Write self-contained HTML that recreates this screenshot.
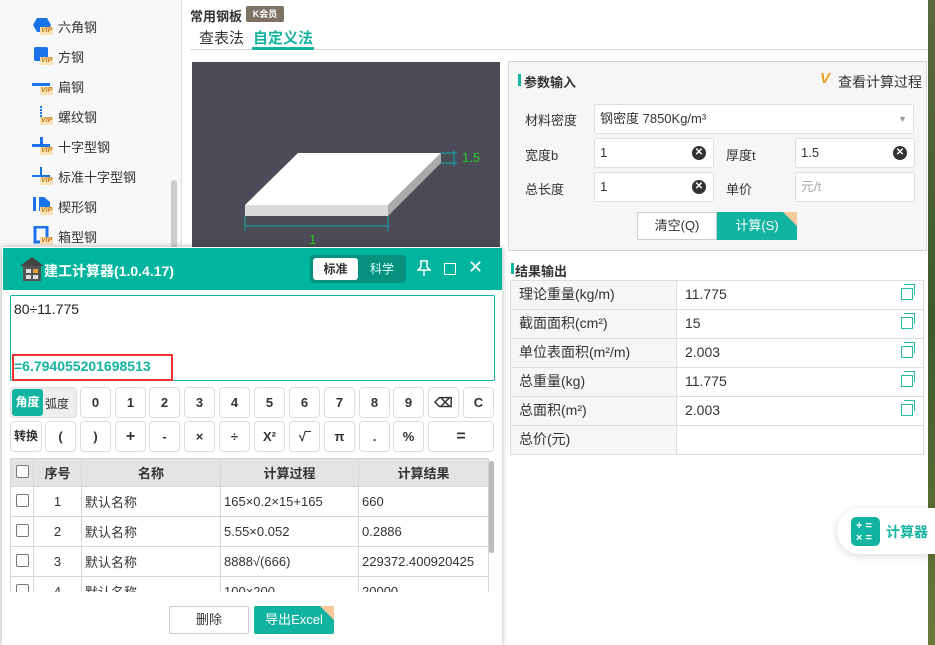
<!DOCTYPE html>
<html><head><meta charset="utf-8"><style>
*{box-sizing:border-box;margin:0;padding:0}
body{width:935px;height:645px;overflow:hidden;position:relative;background:#fff;font-family:"Liberation Sans","Noto Sans CJK SC",sans-serif;font-size:13px;color:#333}
.abs{position:absolute}
.side{left:0;top:0;width:182px;height:645px;background:#f7f8fa;border-right:1px solid #e0e0e0}
.item{position:absolute;left:32px;font-size:13px;color:#333}
.item .ic{position:absolute;left:0;top:-2px;width:20px;height:20px}
.item .vip{position:absolute;left:8px;top:9px;font-size:7px;background:#fbe3b8;color:#c47b13;padding:0 1px;font-weight:bold;line-height:8px}
.item span.t{position:absolute;left:26px;top:-1px;white-space:nowrap}
.strip{left:928px;top:0;width:7px;height:645px;background:linear-gradient(#5a6a3a,#3d5a2a,#6a7a3a)}
.key{position:absolute;height:31px;border:1px solid #ddd;border-radius:4px;background:#fff;text-align:center;line-height:29px;font-weight:bold;font-size:13px;color:#333}
table{border-collapse:collapse}
.ct td,.ct th{border:1px solid #d6d6d6;height:30px;font-size:13px}
.ct th{background:#e4e4e4;font-weight:bold;height:28px}
.rt td{border:1px solid #ddd;height:29px;padding-left:8px;font-size:14px;padding-bottom:2px}
.inp{position:absolute;height:30px;border:1px solid #ddd;border-radius:3px;background:#fff;padding-left:5px;line-height:28px;font-size:13px}
.x{position:absolute;right:7px;top:7px;width:14px;height:14px;border-radius:50%;background:#333;color:#fff;font-size:10px;line-height:14px;text-align:center;font-weight:bold}
.lbl{position:absolute;font-size:13px;color:#333}
.cp{position:absolute;right:10px;top:7px;width:12px;height:12px;border:1.5px solid #2ab9a5}
.cp:before{content:"";position:absolute;left:2px;top:-5px;width:10px;height:10px;border-top:1.5px solid #2ab9a5;border-right:1.5px solid #2ab9a5}
</style></head><body>
<div class="abs side"></div>
<div class="abs" style="left:171px;top:180px;width:6px;height:70px;background:#ccc;border-radius:3px"></div>

<div class="item" style="top:18px"><svg class="ic" viewBox="0 0 20 20"><polygon points="5,2 15,2 19,9 15,16 5,16 1,9" fill="#1a73e8"/></svg><i class="vip">VIP</i><span class="t">六角钢</span></div>
<div class="item" style="top:48px"><svg class="ic" viewBox="0 0 20 20"><rect x="2" y="1" width="14" height="14" rx="2" fill="#1a73e8"/></svg><i class="vip">VIP</i><span class="t">方钢</span></div>
<div class="item" style="top:78px"><svg class="ic" viewBox="0 0 20 20"><rect x="0" y="7" width="18" height="3" fill="#1a73e8"/></svg><i class="vip">VIP</i><span class="t">扁钢</span></div>
<div class="item" style="top:108px"><svg class="ic" viewBox="0 0 20 20"><line x1="9" y1="0" x2="9" y2="14" stroke="#1a73e8" stroke-width="2" stroke-dasharray="2 1"/></svg><i class="vip">VIP</i><span class="t">螺纹钢</span></div>
<div class="item" style="top:138px"><svg class="ic" viewBox="0 0 20 20"><rect x="0" y="8" width="18" height="3" fill="#1a73e8"/><rect x="8" y="1" width="3" height="15" fill="#1a73e8"/></svg><i class="vip">VIP</i><span class="t">十字型钢</span></div>
<div class="item" style="top:168px"><svg class="ic" viewBox="0 0 20 20"><rect x="0" y="9" width="18" height="2" fill="#1a73e8"/><rect x="8" y="1" width="2" height="16" fill="#1a73e8"/></svg><i class="vip">VIP</i><span class="t">标准十字型钢</span></div>
<div class="item" style="top:198px"><svg class="ic" viewBox="0 0 20 20"><rect x="1" y="1" width="3" height="14" fill="#1a73e8"/><polygon points="7,1 12,1 18,6 18,15 7,15" fill="#1a73e8"/></svg><i class="vip">VIP</i><span class="t">楔形钢</span></div>
<div class="item" style="top:228px"><svg class="ic" viewBox="0 0 20 20"><rect x="3" y="1" width="12" height="15" fill="none" stroke="#1a73e8" stroke-width="3"/></svg><i class="vip">VIP</i><span class="t">箱型钢</span></div>

<div class="abs strip"></div>

<div class="abs" style="left:190px;top:6px;font-size:13px;font-weight:bold;color:#333">常用钢板</div>
<div class="abs" style="left:246px;top:6px;width:38px;height:16px;background:#7d7264;border-radius:2px;color:#fff;font-size:9px;line-height:16px;text-align:center;font-weight:bold">K会员</div>
<div class="abs" style="left:199px;top:27px;font-size:15px;color:#333">查表法</div>
<div class="abs" style="left:253px;top:27px;font-size:15px;color:#12b3a0;font-weight:bold">自定义法</div>
<div class="abs" style="left:190px;top:49px;width:738px;height:1px;background:#d6d6d6"></div>
<div class="abs" style="left:252px;top:47px;width:62px;height:3px;background:#12b3a0"></div>

<svg class="abs" style="left:192px;top:62px" width="308" height="190">
<rect width="308" height="190" fill="#4b4c57"/>
<polygon points="53,143 106,91 249,91 196,143" fill="#fff"/>
<polygon points="53,143 196,143 196,154 53,154" fill="#d9d9d9"/>
<polygon points="196,143 249,91 249,101 196,154" fill="#aaa"/>
<line x1="53" y1="164" x2="196" y2="164" stroke="#1aa" stroke-width="1"/>
<line x1="53" y1="154" x2="53" y2="169" stroke="#1aa"/><line x1="196" y1="154" x2="196" y2="169" stroke="#1aa"/>
<line x1="249" y1="91" x2="265" y2="91" stroke="#1aa"/><line x1="249" y1="101" x2="265" y2="101" stroke="#1aa"/><line x1="262" y1="88" x2="262" y2="104" stroke="#1aa"/>
<text x="117" y="182" fill="#2c2" font-size="13" font-family="Liberation Sans">1</text>
<text x="270" y="100" fill="#2c2" font-size="13" font-family="Liberation Sans">1.5</text>
</svg>

<div class="abs" style="left:508px;top:61px;width:419px;height:190px;background:#f6f6f6;border:1px solid #d6d6d6"></div>
<div class="abs" style="left:518px;top:74px;width:3px;height:12px;background:#12b3a0"></div>
<div class="abs" style="left:524px;top:72px;font-weight:bold;font-size:13px">参数输入</div>
<div class="abs" style="left:820px;top:70px;font-size:15px;color:#e8a020;font-weight:bold;font-style:italic">V</div>
<div class="abs" style="left:838px;top:72px;font-size:14px">查看计算过程</div>
<div class="lbl" style="left:525px;top:110px">材料密度</div>
<div class="inp" style="left:594px;top:104px;width:320px">钢密度 7850Kg/m³<span style="position:absolute;right:6px;top:0;color:#999;font-size:9px">▼</span></div>
<div class="lbl" style="left:525px;top:145px">宽度b</div>
<div class="inp" style="left:594px;top:138px;width:120px">1<span class="x">✕</span></div>
<div class="lbl" style="left:726px;top:145px">厚度t</div>
<div class="inp" style="left:795px;top:138px;width:120px">1.5<span class="x">✕</span></div>
<div class="lbl" style="left:525px;top:179px">总长度</div>
<div class="inp" style="left:594px;top:172px;width:120px">1<span class="x">✕</span></div>
<div class="lbl" style="left:726px;top:179px">单价</div>
<div class="inp" style="left:795px;top:172px;width:120px;color:#aaa">元/t</div>
<div class="abs" style="left:637px;top:212px;width:80px;height:28px;background:#fff;border:1px solid #ccc;text-align:center;line-height:26px;font-size:13px">清空(Q)</div>
<div class="abs" style="left:717px;top:212px;width:80px;height:28px;background:#12b3a0;color:#fff;text-align:center;line-height:28px;font-size:13px;overflow:hidden">计算(S)<span style="position:absolute;right:-10px;top:-10px;width:20px;height:20px;background:#f5c99a;transform:rotate(45deg)"></span></div>

<div class="abs" style="left:511px;top:263px;width:3px;height:11px;background:#12b3a0"></div>
<div class="abs" style="left:515px;top:261px;font-weight:bold;font-size:13px">结果输出</div>
<table class="abs rt" style="left:510px;top:280px;width:414px">
<tr><td style="width:166px;background:#f6f6f6">理论重量(kg/m)</td><td style="position:relative">11.775<i class="cp"></i></td></tr>
<tr><td style="background:#f6f6f6">截面面积(cm²)</td><td style="position:relative">15<i class="cp"></i></td></tr>
<tr><td style="background:#f6f6f6">单位表面积(m²/m)</td><td style="position:relative">2.003<i class="cp"></i></td></tr>
<tr><td style="background:#f6f6f6">总重量(kg)</td><td style="position:relative">11.775<i class="cp"></i></td></tr>
<tr><td style="background:#f6f6f6">总面积(m²)</td><td style="position:relative">2.003<i class="cp"></i></td></tr>
<tr><td style="background:#f6f6f6">总价(元)</td><td></td></tr>
</table>

<div class="abs" style="left:837px;top:508px;width:98px;height:46px;background:#fff;border-radius:23px 0 0 23px;box-shadow:0 2px 8px rgba(0,0,0,.15)"></div>
<div class="abs" style="left:851px;top:517px;width:29px;height:29px;background:#12b3a0;border-radius:5px;color:#fff;font-size:11px;font-weight:bold;line-height:12px;padding:3px 0 0 5px">+ =<br>× =</div>
<div class="abs" style="left:886px;top:522px;font-size:14px;color:#12b3a0;font-weight:bold">计算器</div>

<!-- calculator window -->
<div class="abs" style="left:2px;top:247px;width:500px;height:398px;background:#fff;box-shadow:0 0 6px rgba(0,0,0,.3)"></div>
<div class="abs" style="left:3px;top:248px;width:499px;height:42px;background:#00b59e"></div>
<svg class="abs" style="left:19px;top:256px" width="26" height="26"><polygon points="13,1 25,10 1,10" fill="#444"/><rect x="4" y="10" width="18" height="15" fill="#555"/><rect x="7" y="13" width="5" height="4" fill="#ddd"/><rect x="14" y="13" width="5" height="4" fill="#e8a030"/><rect x="7" y="19" width="5" height="4" fill="#ddd"/><rect x="14" y="19" width="5" height="4" fill="#ddd"/></svg>
<div class="abs" style="left:44px;top:261px;color:#fff;font-size:14px;font-weight:bold">建工计算器(1.0.4.17)</div>
<div class="abs" style="left:310px;top:255px;width:96px;height:28px;background:#06917f;border-radius:4px"></div>
<div class="abs" style="left:313px;top:258px;width:45px;height:22px;background:#fff;border-radius:3px;text-align:center;line-height:22px;font-size:12px;font-weight:bold">标准</div>
<div class="abs" style="left:362px;top:258px;width:40px;height:22px;color:#dff;text-align:center;line-height:22px;font-size:12px">科学</div>
<svg class="abs" style="left:417px;top:260px" width="14" height="16"><path d="M3 1h8M4 1v6l-3 3h12l-3-3V1M7 10v6" fill="none" stroke="#fff" stroke-width="1.5"/></svg>
<div class="abs" style="left:444px;top:263px;width:12px;height:12px;border:1.5px solid #fff"></div>
<div class="abs" style="left:468px;top:257px;color:#fff;font-size:18px">✕</div>

<div class="abs" style="left:10px;top:295px;width:485px;height:86px;border:1px solid #12b3a0;border-radius:2px"></div>
<div class="abs" style="left:14px;top:301px;font-size:14px;color:#222">80÷11.775</div>
<div class="abs" style="left:12px;top:354px;width:161px;height:27px;border:2px solid #e33"></div>
<div class="abs" style="left:14px;top:358px;font-size:14px;color:#12b3a0;font-weight:bold">=6.794055201698513</div>

<div class="abs" style="left:10px;top:387px;width:67px;height:31px;background:#eee;border:1px solid #ddd;border-radius:4px"></div>
<div class="abs" style="left:12px;top:389px;width:31px;height:27px;background:#12b3a0;border-radius:3px;color:#fff;font-weight:bold;font-size:12px;text-align:center;line-height:27px">角度</div>
<div class="abs" style="left:45px;top:395px;font-size:12px;color:#333">弧度</div>
<div class="key" style="left:80px;top:387px;width:31px">0</div>
<div class="key" style="left:115px;top:387px;width:31px">1</div>
<div class="key" style="left:149px;top:387px;width:31px">2</div>
<div class="key" style="left:184px;top:387px;width:31px">3</div>
<div class="key" style="left:219px;top:387px;width:31px">4</div>
<div class="key" style="left:254px;top:387px;width:31px">5</div>
<div class="key" style="left:289px;top:387px;width:31px">6</div>
<div class="key" style="left:324px;top:387px;width:31px">7</div>
<div class="key" style="left:359px;top:387px;width:31px">8</div>
<div class="key" style="left:393px;top:387px;width:31px">9</div>
<div class="key" style="left:428px;top:387px;width:31px">⌫</div>
<div class="key" style="left:463px;top:387px;width:31px">C</div>
<div class="key" style="left:10px;top:421px;width:32px;font-size:12px">转换</div>
<div class="key" style="left:45px;top:421px;width:31px">(</div>
<div class="key" style="left:80px;top:421px;width:31px">)</div>
<div class="key" style="left:115px;top:421px;width:31px;font-size:16px">+</div>
<div class="key" style="left:149px;top:421px;width:31px">-</div>
<div class="key" style="left:184px;top:421px;width:31px">×</div>
<div class="key" style="left:219px;top:421px;width:31px">÷</div>
<div class="key" style="left:254px;top:421px;width:31px">X²</div>
<div class="key" style="left:289px;top:421px;width:31px">√‾</div>
<div class="key" style="left:324px;top:421px;width:31px">π</div>
<div class="key" style="left:359px;top:421px;width:31px">.</div>
<div class="key" style="left:393px;top:421px;width:31px">%</div>
<div class="key" style="left:428px;top:421px;width:66px;font-size:16px">=</div>

<div class="abs" style="left:10px;top:458px;width:479px;height:134px;overflow:hidden">
<table class="ct" style="width:479px">
<tr><th style="width:23px"><i style="display:inline-block;width:13px;height:13px;border:1px solid #777;border-radius:2px;background:#fff"></i></th><th style="width:48px">序号</th><th style="width:139px">名称</th><th style="width:138px">计算过程</th><th>计算结果</th></tr>
<tr><td style="text-align:center"><i style="display:inline-block;width:13px;height:13px;border:1px solid #777;border-radius:2px"></i></td><td style="text-align:center">1</td><td style="padding-left:3px">默认名称</td><td style="padding-left:3px">165×0.2×15+165</td><td style="padding-left:3px">660</td></tr>
<tr><td style="text-align:center"><i style="display:inline-block;width:13px;height:13px;border:1px solid #777;border-radius:2px"></i></td><td style="text-align:center">2</td><td style="padding-left:3px">默认名称</td><td style="padding-left:3px">5.55×0.052</td><td style="padding-left:3px">0.2886</td></tr>
<tr><td style="text-align:center"><i style="display:inline-block;width:13px;height:13px;border:1px solid #777;border-radius:2px"></i></td><td style="text-align:center">3</td><td style="padding-left:3px">默认名称</td><td style="padding-left:3px">8888√(666)</td><td style="padding-left:3px">229372.400920425</td></tr>
<tr><td style="text-align:center"><i style="display:inline-block;width:13px;height:13px;border:1px solid #777;border-radius:2px"></i></td><td style="text-align:center">4</td><td style="padding-left:3px">默认名称</td><td style="padding-left:3px">100×200</td><td style="padding-left:3px">20000</td></tr>
</table></div>
<div class="abs" style="left:489px;top:461px;width:5px;height:92px;background:#bbb;border-radius:2px"></div>

<div class="abs" style="left:169px;top:606px;width:80px;height:28px;border:1px solid #ccc;border-radius:2px;text-align:center;line-height:26px;font-size:13px">删除</div>
<div class="abs" style="left:254px;top:606px;width:80px;height:28px;background:#12b3a0;color:#fff;border-radius:2px;text-align:center;line-height:28px;font-size:13px;overflow:hidden">导出Excel<span style="position:absolute;right:-10px;top:-10px;width:20px;height:20px;background:#f5c99a;transform:rotate(45deg)"></span></div>
</body></html>
